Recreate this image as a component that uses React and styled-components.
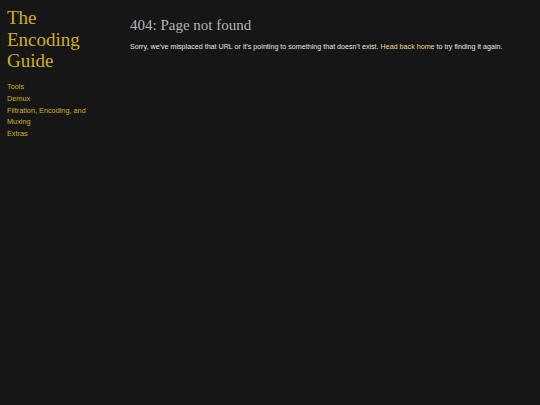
import React from "react";
import styled, { createGlobalStyle } from "styled-components";

const Global = createGlobalStyle`
  html, body { margin: 0; padding: 0; background: #161616; }
  body { font-family: "Liberation Sans", Arial, sans-serif; }
`;

const Page = styled.div`
  display: flex;
  min-height: 405px;
  background: #161616;
`;

const Sidebar = styled.nav`
  width: 115px;
  padding: 7px 0 0 7px;
  flex-shrink: 0;
`;

const SiteTitle = styled.a`
  display: block;
  font-family: "Liberation Serif", Georgia, serif;
  font-size: 19px;
  line-height: 21.5px;
  color: #cfb022;
  text-decoration: none;
  margin-bottom: 9.5px;
`;

const NavList = styled.ul`
  list-style: none;
  margin: 0;
  padding: 0;
  width: 85px;
`;

const NavItem = styled.li`
  font-size: 7.3px;
  line-height: 11px;
  margin-bottom: 1px;
  a { color: #cfb022; text-decoration: none; }
`;

const Main = styled.main`
  padding: 15px 0 0 8px;
`;

const Heading = styled.h1`
  font-family: "Liberation Serif", Georgia, serif;
  font-weight: normal;
  font-size: 15px;
  line-height: 20px;
  color: #b4b4b4;
  margin: 0 0 7px;
`;

const Text = styled.p`
  font-size: 7.15px;
  line-height: 10px;
  color: #e6e6e6;
  margin: 0;
`;

const Link = styled.a`
  color: #ecdc9a;
  text-decoration: none;
`;

export default function App() {
  return (
    <>
      <Global />
      <Page>
        <Sidebar>
          <SiteTitle href="#">The<br />Encoding<br />Guide</SiteTitle>
          <NavList>
            <NavItem><a href="#">Tools</a></NavItem>
            <NavItem><a href="#">Demux</a></NavItem>
            <NavItem><a href="#">Filtration, Encoding, and Muxing</a></NavItem>
            <NavItem><a href="#">Extras</a></NavItem>
          </NavList>
        </Sidebar>
        <Main>
          <Heading>404: Page not found</Heading>
          <Text>
            Sorry, we've misplaced that URL or it's pointing to something that doesn't exist.{" "}
            <Link href="#">Head back home</Link> to try finding it again.
          </Text>
        </Main>
      </Page>
    </>
  );
}
